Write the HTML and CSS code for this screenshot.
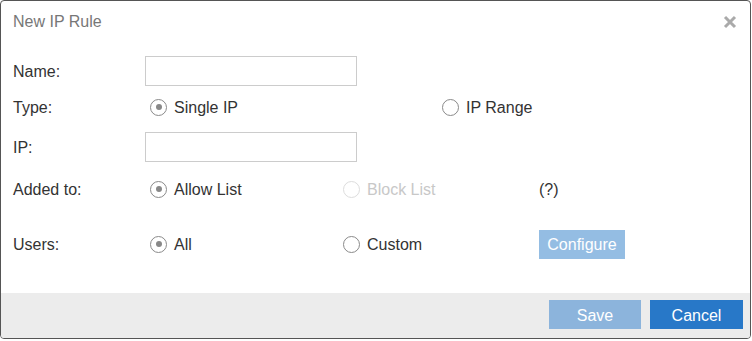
FILE: index.html
```html
<!DOCTYPE html>
<html lang="en">
<head>
  <meta charset="UTF-8" />
  <title>New IP Rule</title>
  <link rel="stylesheet" href="styles.css">
</head>
<body>
  <div class="dialog">
    <div class="dialog-header">
      <span class="dialog-title">New IP Rule</span>
      <span class="close-btn">
        <svg width="14" height="14" viewBox="0 0 14 14">
          <path d="M2 2 L12 12 M12 2 L2 12" stroke="#aaa" stroke-width="3" />
        </svg>
      </span>
    </div>

    <div class="dialog-body">
      <div class="row row-name">
        <label class="field-label">Name:</label>
        <input type="text" class="text-input" />
      </div>

      <div class="row row-type">
        <label class="field-label">Type:</label>
        <div class="radio-group">
          <span class="option option-wide"><span class="radio checked"></span>Single IP</span>
          <span class="option"><span class="radio"></span>IP Range</span>
        </div>
      </div>

      <div class="row row-ip">
        <label class="field-label">IP:</label>
        <input type="text" class="text-input" />
      </div>

      <div class="row row-added">
        <label class="field-label">Added to:</label>
        <div class="radio-group">
          <span class="option"><span class="radio checked"></span>Allow List</span>
          <span class="option option-mid disabled"><span class="radio"></span>Block List</span>
          <span class="help">(?)</span>
        </div>
      </div>

      <div class="row row-users">
        <label class="field-label">Users:</label>
        <div class="radio-group">
          <span class="option"><span class="radio checked"></span>All</span>
          <span class="option option-mid"><span class="radio"></span>Custom</span>
          <button class="configure-btn">Configure</button>
        </div>
      </div>
    </div>

    <div class="dialog-footer">
      <button class="footer-btn save-btn">Save</button>
      <button class="footer-btn cancel-btn">Cancel</button>
    </div>
  </div>
</body>
</html>
```

FILE: styles.css
```css
body {
  margin: 0;
  background-color: #fff;
  font-family: 'Liberation Sans', Arial, sans-serif;
  font-size: 16px;
  color: #333;
}
.dialog {
  width: 751px;
  height: 339px;
  box-sizing: border-box;
  border: 1px solid #555;
  border-radius: 4px;
  background-color: #fff;
  display: flex;
  flex-direction: column;
  overflow: hidden;
}
.dialog-header {
  height: 40px;
  display: flex;
  align-items: center;
  justify-content: space-between;
  padding: 0 13px 0 12px;
}
.dialog-title {
  color: #777;
  font-size: 16px;
  padding-top: 2px;
}
.close-btn {
  display: flex;
  margin-top: 1px;
}
.dialog-body {
  padding: 15px 12px 0 12px;
}
.row {
  display: flex;
  align-items: center;
  height: 30px;
}
.row-type {
  margin-top: 6px;
}
.row-ip {
  margin-top: 10px;
}
.row-added {
  margin-top: 12px;
}
.row-users {
  margin-top: 25px;
}
.field-label {
  width: 132px;
  flex-shrink: 0;
  padding-top: 2px;
}
.text-input {
  width: 212px;
  height: 30px;
  box-sizing: border-box;
  border: 1px solid #ccc;
  padding: 4px 8px;
  font-family: inherit;
  font-size: 16px;
  margin: 0;
}
.radio-group {
  display: flex;
  align-items: center;
  padding-left: 5px;
}
.option {
  display: flex;
  align-items: center;
  width: 193px;
  padding-top: 2px;
}
.option-wide {
  width: 292px;
}
.option-mid {
  width: 196px;
}
.radio {
  width: 17px;
  height: 17px;
  box-sizing: border-box;
  border: 1.5px solid #8a8a8a;
  border-radius: 50%;
  margin: -2px 7px 0 0;
  display: flex;
  align-items: center;
  justify-content: center;
}
.radio.checked::after {
  content: "";
  width: 6px;
  height: 6px;
  border-radius: 50%;
  background-color: #888;
}
.option.disabled {
  color: #c8c8c8;
}
.option.disabled .radio {
  border-color: #ddd;
}
.help {
  color: #333;
  padding-top: 2px;
}
.configure-btn {
  width: 86px;
  height: 29px;
  border: none;
  background-color: #94bde3;
  color: #fff;
  font-family: inherit;
  font-size: 16px;
  padding: 2px 0 0 0;
}
.dialog-footer {
  margin-top: auto;
  height: 45px;
  background-color: #ececec;
  display: flex;
  justify-content: flex-end;
  align-items: flex-start;
  gap: 9px;
  padding: 7px 7px 0 0;
  box-sizing: border-box;
}
.footer-btn {
  height: 29px;
  border: none;
  color: #fff;
  font-family: inherit;
  font-size: 16px;
  padding: 2px 0 0 0;
}
.save-btn {
  width: 92px;
  background-color: #8cb4dc;
}
.cancel-btn {
  width: 93px;
  background-color: #2878c8;
}
```
